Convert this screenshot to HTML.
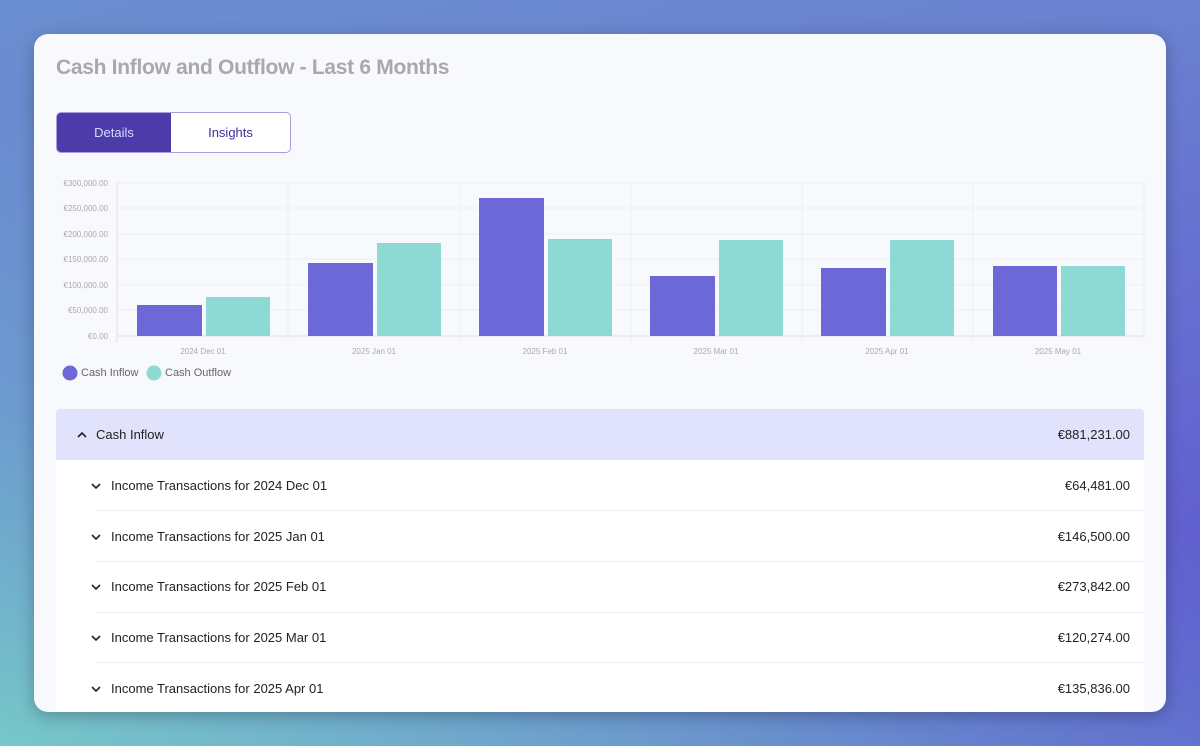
<!DOCTYPE html>
<html><head><meta charset="utf-8"><style>
*{margin:0;padding:0;box-sizing:border-box}
body{width:1200px;height:746px;overflow:hidden;font-family:"Liberation Sans",sans-serif;
background:linear-gradient(160deg,#6b8fd0 0%,#6a7fd0 40%,#5d52cf 100%);position:relative}
.bg2{position:absolute;inset:0;background:linear-gradient(20deg,rgba(120,210,200,.9) 0%,rgba(110,190,205,.4) 30%,rgba(0,0,0,0) 55%)}
.card{position:absolute;left:34px;top:34px;width:1132px;height:678px;background:#f8f9fc;border-radius:14px;overflow:hidden;box-shadow:0 4px 16px rgba(0,0,0,.25)}
h1{position:absolute;left:22px;top:22px;font-size:21px;font-weight:bold;color:#a9a9a9;letter-spacing:-0.3px}
.tabs{position:absolute;left:22px;top:78px;width:235px;height:41px;border:1px solid #a89ede;border-radius:5px;overflow:hidden;display:flex;background:#fff}
.tabs div{display:flex;align-items:center;justify-content:center;font-size:13px}
.t1{width:114px;background:#4c3ba8;color:#d6dcff}
.t2{flex:1;color:#3b2fa0}
.row{position:absolute;left:22px;width:1088px;height:51px;display:flex;align-items:center;font-size:13px;color:#222}
.row .amt{position:absolute;right:14px}
.sep{position:absolute;left:62px;width:1048px;height:1px;background:#eceef2}
</style></head><body><div class="bg2"></div>
<div class="card">
<h1>Cash Inflow and Outflow - Last 6 Months</h1>
<div class="tabs"><div class="t1">Details</div><div class="t2">Insights</div></div>
<svg style="position:absolute;left:0;top:0" width="1132" height="360" font-family="Liberation Sans" font-size="8" fill="#aaa">
<g stroke="#eceef2" stroke-width="1">
<line x1="83" y1="149" x2="1110" y2="149"/><line x1="83" y1="174" x2="1110" y2="174"/><line x1="83" y1="200" x2="1110" y2="200"/><line x1="83" y1="225" x2="1110" y2="225"/><line x1="83" y1="251" x2="1110" y2="251"/><line x1="83" y1="276" x2="1110" y2="276"/>
<line x1="254" y1="149" x2="254" y2="308"/><line x1="426" y1="149" x2="426" y2="308"/><line x1="597" y1="149" x2="597" y2="308"/><line x1="768" y1="149" x2="768" y2="308"/><line x1="939" y1="149" x2="939" y2="308"/><line x1="1110" y1="149" x2="1110" y2="308"/>
</g>
<line x1="83" y1="149" x2="83" y2="308" stroke="#dfe0e5"/><line x1="83" y1="302" x2="1110" y2="302" stroke="#dfe0e5"/>
<g text-anchor="end"><text x="74" y="152">€300,000.00</text><text x="74" y="177">€250,000.00</text><text x="74" y="203">€200,000.00</text><text x="74" y="228">€150,000.00</text><text x="74" y="254">€100,000.00</text><text x="74" y="279">€50,000.00</text><text x="74" y="305">€0.00</text></g>
<g fill="#6c68d8">
<rect x="103" y="271" width="65" height="31"/><rect x="274" y="229" width="65" height="73"/><rect x="445" y="164" width="65" height="138"/><rect x="616" y="242" width="65" height="60"/><rect x="787" y="234" width="65" height="68"/><rect x="959" y="232" width="64" height="70"/></g>
<g fill="#8dd9d3">
<rect x="172" y="263" width="64" height="39"/><rect x="343" y="209" width="64" height="93"/><rect x="514" y="205" width="64" height="97"/><rect x="685" y="206" width="64" height="96"/><rect x="856" y="206" width="64" height="96"/><rect x="1027" y="232" width="64" height="70"/></g>
<g text-anchor="middle"><text x="169" y="320">2024 Dec 01</text><text x="340" y="320">2025 Jan 01</text><text x="511" y="320">2025 Feb 01</text><text x="682" y="320">2025 Mar 01</text><text x="853" y="320">2025 Apr 01</text><text x="1024" y="320">2025 May 01</text></g>
<circle cx="36" cy="339" r="7.5" fill="#6c68d8"/><text x="47" y="342" font-size="11" fill="#666">Cash Inflow</text>
<circle cx="120" cy="339" r="7.5" fill="#8dd9d3"/><text x="131" y="342" font-size="11" fill="#666">Cash Outflow</text>
</svg>
<div class="row" style="top:375px;background:#e1e2fb;border-radius:4px 4px 0 0"><svg style="margin-left:21px;margin-right:9px" width="10" height="6"><path d="M1 5L5 1L9 5" stroke="#222" stroke-width="1.6" fill="none"/></svg>Cash Inflow<span class="amt">€881,231.00</span></div>
<div style="position:absolute;left:22px;top:426px;width:1088px;height:260px;background:#fff"></div>
<div class="row" style="top:426px"><svg style="margin-left:35px;margin-right:10px" width="10" height="6"><path d="M1 1L5 5L9 1" stroke="#222" stroke-width="1.6" fill="none"/></svg>Income Transactions for 2024 Dec 01<span class="amt">€64,481.00</span></div>
<div class="sep" style="top:476px"></div>
<div class="row" style="top:477px"><svg style="margin-left:35px;margin-right:10px" width="10" height="6"><path d="M1 1L5 5L9 1" stroke="#222" stroke-width="1.6" fill="none"/></svg>Income Transactions for 2025 Jan 01<span class="amt">€146,500.00</span></div>
<div class="sep" style="top:527px"></div>
<div class="row" style="top:527px"><svg style="margin-left:35px;margin-right:10px" width="10" height="6"><path d="M1 1L5 5L9 1" stroke="#222" stroke-width="1.6" fill="none"/></svg>Income Transactions for 2025 Feb 01<span class="amt">€273,842.00</span></div>
<div class="sep" style="top:578px"></div>
<div class="row" style="top:578px"><svg style="margin-left:35px;margin-right:10px" width="10" height="6"><path d="M1 1L5 5L9 1" stroke="#222" stroke-width="1.6" fill="none"/></svg>Income Transactions for 2025 Mar 01<span class="amt">€120,274.00</span></div>
<div class="sep" style="top:628px"></div>
<div class="row" style="top:629px"><svg style="margin-left:35px;margin-right:10px" width="10" height="6"><path d="M1 1L5 5L9 1" stroke="#222" stroke-width="1.6" fill="none"/></svg>Income Transactions for 2025 Apr 01<span class="amt">€135,836.00</span></div>
</div>
</body></html>
